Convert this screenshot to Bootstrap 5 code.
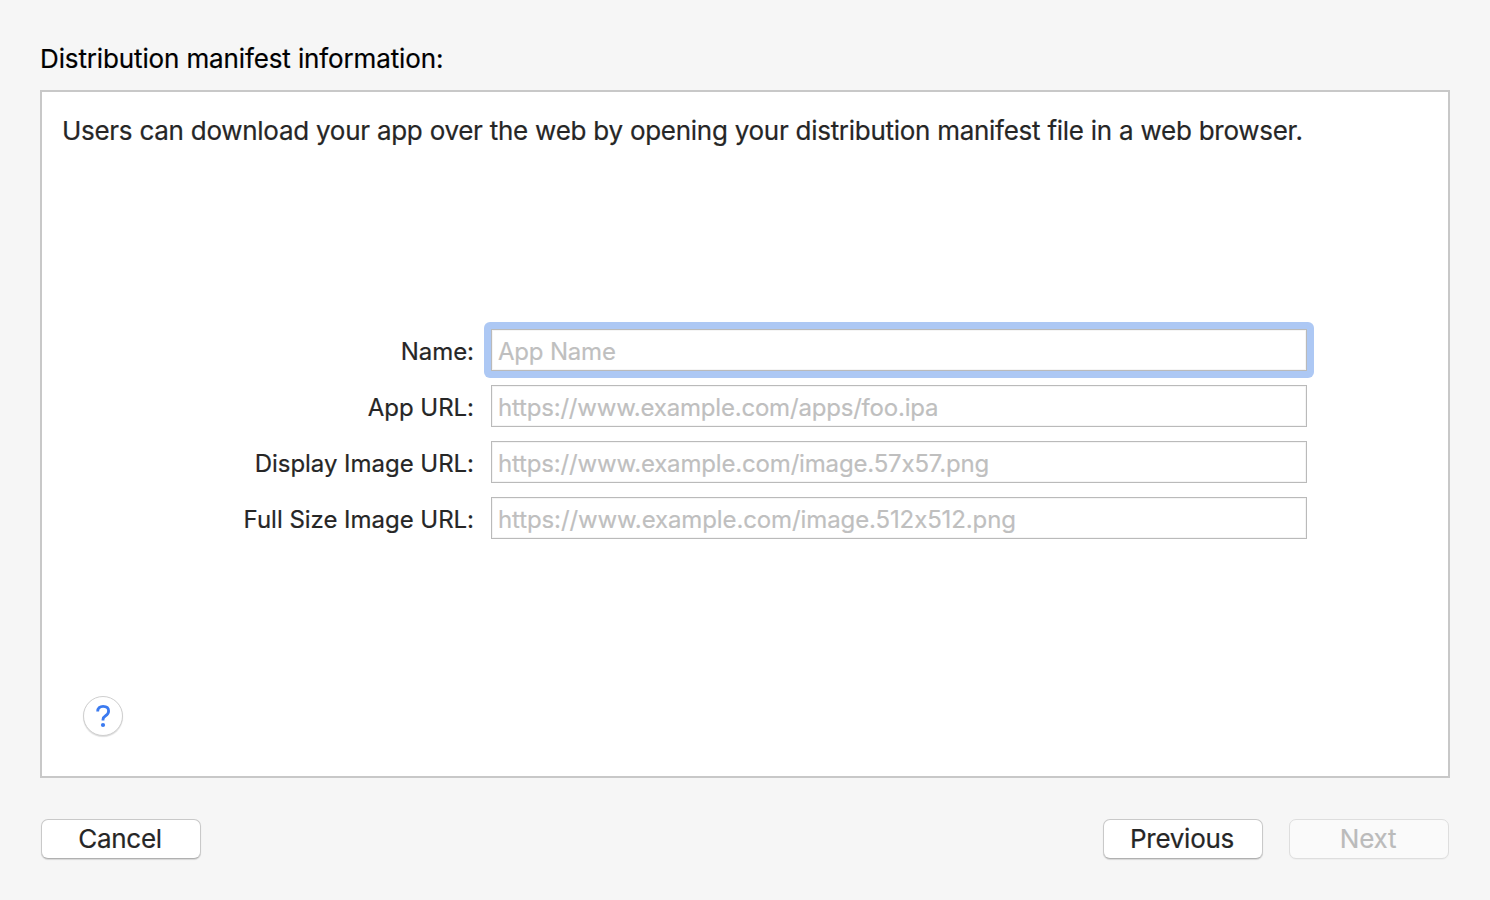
<!DOCTYPE html>
<html lang="en">
<head>
<meta charset="utf-8">
<meta name="viewport" content="width=device-width, initial-scale=1">
<title>Distribution manifest information</title>
<link rel="stylesheet" href="https://cdn.jsdelivr.net/npm/bootstrap@5.3.0/dist/css/bootstrap.min.css">
<style>
  body { background: #f6f6f6; font-family: Inter, "Liberation Sans", sans-serif; font-size: 26px; line-height: 32px; color: #262626; font-feature-settings: "calt" 0; -webkit-text-stroke: .2px currentColor; }
  .dialog { height: 900px; padding: 43px 40px 40px; }
  .dialog-title { font-size: 26px; line-height: 32px; font-weight: 400; letter-spacing: -.13px; color: #000; margin: 0 0 15px; }
  .panel { height: 688px; border: 2px solid #c8c8c8; background: #fff; padding: 23px 20px 40px; }
  .intro { letter-spacing: -.29px; word-spacing: .15px; }
  .fields { margin-top: 182px; gap: 14px; font-size: 24px; }
  .field-label { width: 412px; padding: 2px 0 0; line-height: 42px; height: 42px; letter-spacing: -.03px; }
  .field { width: 816px; height: 42px; padding: 2px 0 0 6px; margin-left: 17px; border: 1px solid #bababa; border-radius: 0; font-size: 24px; line-height: 38px; letter-spacing: -.2px; background: #fff; box-shadow: inset 0 0 0 1px #f5f5f5; }
  .field::placeholder { color: #bfbfbf; opacity: 1; }
  #disp { letter-spacing: -.17px; }
  #full { letter-spacing: -.11px; }
  .focus-frame { margin: -7px -7px -7px 10px; padding: 7px; border-radius: 6px; background: #adc8f4; }
  .focus-frame .field { margin-left: 0; }
  .help { width: 40px; height: 40px; margin-left: 21px; border: 1px solid #cfcfcf; background: #fff; box-shadow: 0 1px 1px #0002; }
  .actions { margin: 41px 1px 0; }
  .push { width: 160px; height: 40px; padding: 0 2px 0 0; font-size: 26px; line-height: 36px; letter-spacing: -.27px; border: 1px solid #c9c9c9; border-bottom-color: #b0b0b0; border-radius: 7px; background: #fff; color: #262626; box-shadow: 0 1px 1px #0002; }
  .push:disabled { background: #fafafa; color: #bbb; border-color: #dedede; opacity: 1; box-shadow: 0 1px 1px #00000008; }
  .push + .push:disabled { margin-left: 26px; }
</style>
</head>
<body>
<main class="dialog">
  <h1 class="dialog-title">Distribution manifest information:</h1>
  <section class="panel d-flex flex-column">
    <p class="intro mb-0">Users can download your app over the web by opening your distribution manifest file in a web browser.</p>
    <form class="fields d-flex flex-column">
      <div class="d-flex"><label class="field-label text-end" for="name">Name:</label><div class="focus-frame"><input id="name" class="field form-control" placeholder="App Name"></div></div>
      <div class="d-flex"><label class="field-label text-end" for="app">App URL:</label><input id="app" class="field form-control" placeholder="https://www.example.com/apps/foo.ipa"></div>
      <div class="d-flex"><label class="field-label text-end" for="disp">Display Image URL:</label><input id="disp" class="field form-control" placeholder="https://www.example.com/image.57x57.png"></div>
      <div class="d-flex"><label class="field-label text-end" for="full">Full Size Image URL:</label><input id="full" class="field form-control" placeholder="https://www.example.com/image.512x512.png"></div>
    </form>
    <button class="help rounded-circle p-0 mt-auto d-flex align-items-center justify-content-center" type="button" aria-label="Help">
      <svg width="16" height="24" viewBox="0 0 16 24" fill="none" stroke="#3b7af0" stroke-width="2.8"><path d="M2.700 7.500C2.700 4 4.900 2.400 8.100 2.400c3.300 0 5.500 1.800 5.500 4.700 0 2.300-1.200 3.600-3 4.700-1.900 1.200-2.600 2-2.600 3.700v1"/><circle cx="8" cy="21" r="2.100" fill="#3b7af0" stroke="none"/></svg>
    </button>
  </section>
  <footer class="actions d-flex">
    <button class="push btn" type="button">Cancel</button>
    <button class="push btn ms-auto" type="button">Previous</button>
    <button class="push btn" type="button" disabled>Next</button>
  </footer>
</main>
<script src="https://cdn.jsdelivr.net/npm/bootstrap@5.3.0/dist/js/bootstrap.bundle.min.js"></script>
</body>
</html>
